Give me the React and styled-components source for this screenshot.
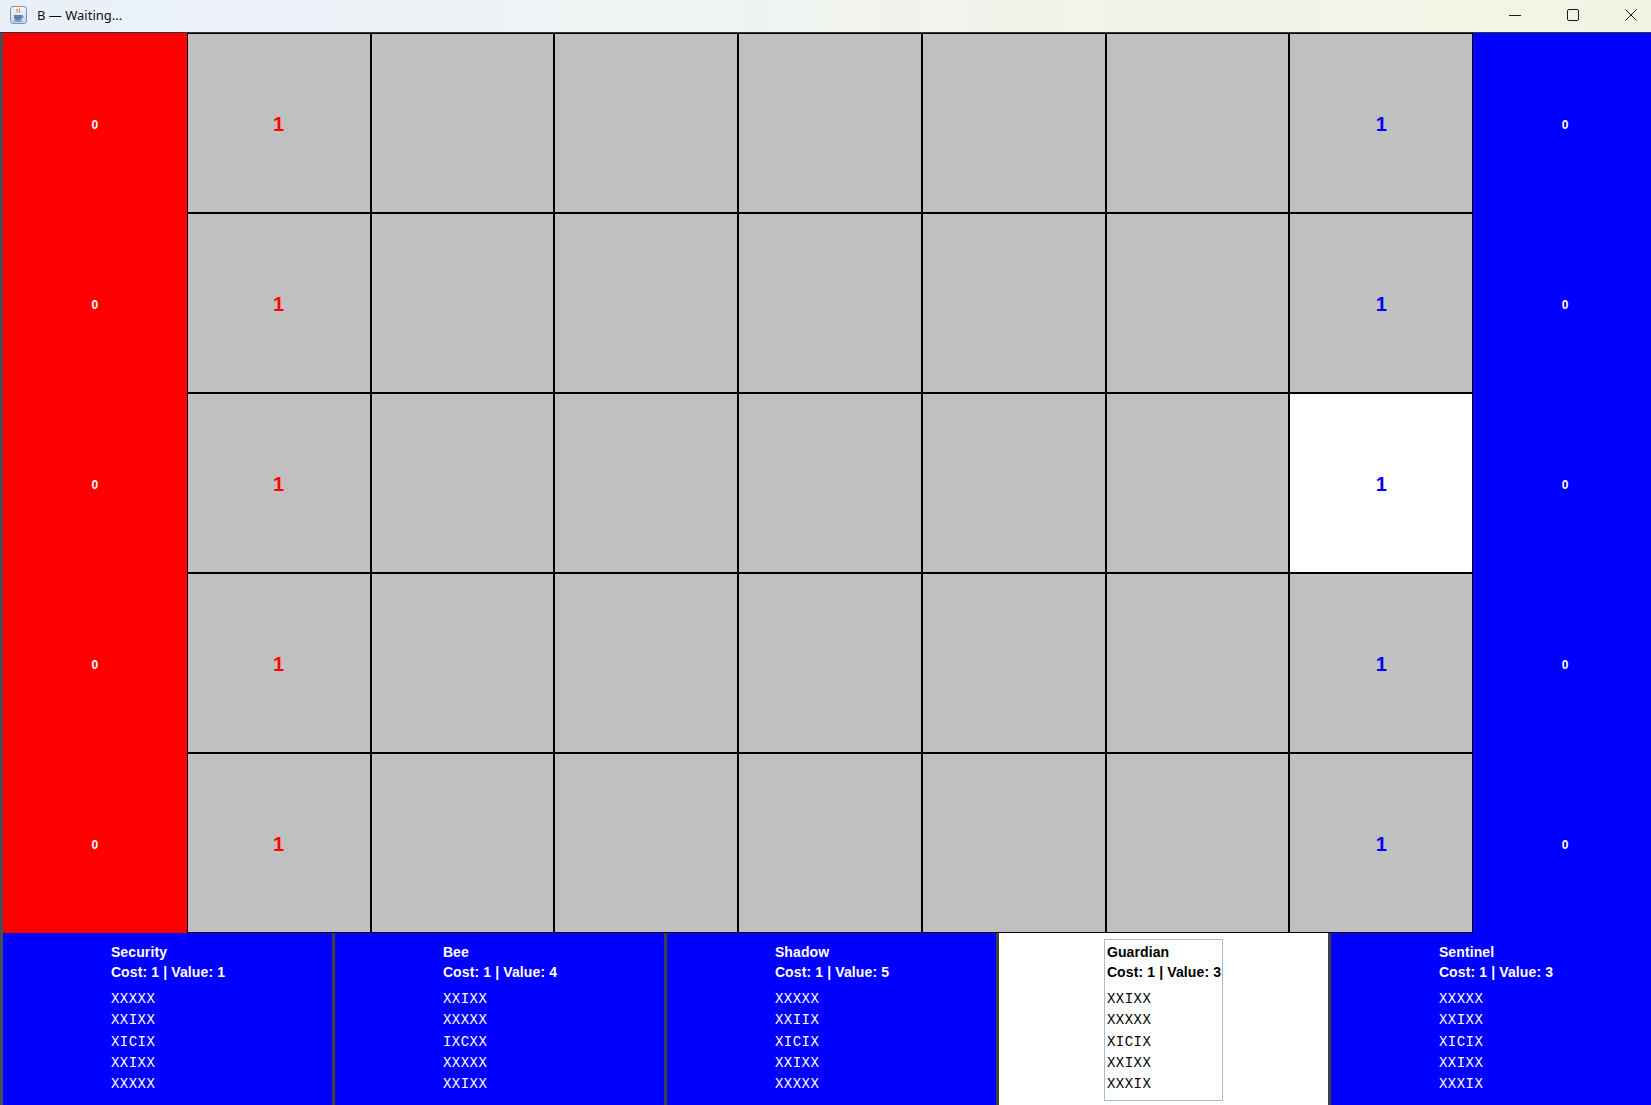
import React from "react"
import styled, { createGlobalStyle } from "styled-components"

const colors = {
  red: "#ff0000",
  blue: "#0000ff",
  gray: "#c0c0c0",
  white: "#ffffff",
  black: "#000000",
  frame: "#454c55",
  gap: "#404040",
}

const GlobalStyle = createGlobalStyle`
  html, body {
    margin: 0;
    padding: 0;
    overflow: hidden;
    background: ${colors.frame};
  }
  * {
    box-sizing: border-box;
  }
`

const Window = styled.div`
  width: 1660px;
  height: 1105px;
  display: flex;
  flex-direction: column;
  overflow: hidden;
`

const TitleBar = styled.div`
  height: 33px;
  flex: none;
  display: flex;
  align-items: center;
  background: linear-gradient(90deg, #e9f0f9 0%, #eef3f4 35%, #f2f3e7 70%, #f3f3e5 100%);
  border-bottom: 1px solid #2f353c;
  padding-left: 10px;
  padding-bottom: 2px;
`

const TitleText = styled.span`
  font-family: "Noto Sans", "Open Sans", sans-serif;
  font-size: 13px;
  color: #111;
  margin-left: 10px;
  flex: 1;
`

const Controls = styled.div`
  display: flex;
  height: 100%;
`

const ControlButton = styled.div`
  width: 58px;
  height: 100%;
  display: flex;
  align-items: center;
  justify-content: center;
`

const Content = styled.div`
  flex: 1;
  display: flex;
  flex-direction: column;
  border-left: 3px solid ${colors.frame};
  border-right: 3px solid ${colors.frame};
  min-height: 0;
`

const Board = styled.div`
  display: grid;
  grid-template-columns: repeat(9, 1fr);
  grid-template-rows: repeat(5, 180px);
  flex: none;
`

const Cell = styled.div`
  display: flex;
  align-items: center;
  justify-content: center;
  background: ${p => p.$bg};
  border: ${p => (p.$framed ? `1px solid ${colors.black}` : "none")};
  font-family: "Liberation Sans", Arial, sans-serif;
  font-weight: bold;
`

const SideCount = styled.span`
  color: ${colors.white};
  font-size: 12px;
  margin-top: 3px;
`

const Strength = styled.span`
  color: ${p => p.$color};
  font-size: 20px;
  margin-top: 2px;
`

const CardBar = styled.div`
  flex: 1;
  display: grid;
  grid-template-columns: repeat(5, 329px);
  column-gap: 3px;
  background: ${colors.gap};
`

const Card = styled.div`
  background: ${p => (p.$selected ? colors.white : colors.blue)};
  color: ${p => (p.$selected ? colors.black : colors.white)};
  display: flex;
  justify-content: center;
  align-items: flex-start;
  padding-top: 6px;
`

const CardBox = styled.div`
  border: 1px solid ${p => (p.$selected ? "#a5bcd5" : "transparent")};
  padding: 2px 1px 5px 2px;
`

const CardTitle = styled.div`
  font-family: "Liberation Sans", Arial, sans-serif;
  font-weight: bold;
  font-size: 14px;
  letter-spacing: 0.12px;
  line-height: 20px;
  white-space: nowrap;
`

const Pattern = styled.div`
  margin-top: 7px;
  font-family: "Liberation Mono", "Courier New", monospace;
  font-size: 14px;
  letter-spacing: 0.5px;
  line-height: 21.3px;
  white-space: pre;
`

const JavaIcon = () => (
  <svg width="17" height="18" viewBox="0 0 17 18">
    <defs>
      <linearGradient id="jbg" x1="0" y1="0" x2="0" y2="1">
        <stop offset="0" stopColor="#f4f7fb" />
        <stop offset="1" stopColor="#c9d6e4" />
      </linearGradient>
    </defs>
    <rect x="0.5" y="0.5" width="16" height="17" rx="2.5" fill="url(#jbg)" stroke="#7d93ad" />
    <path d="M7 3c-1 1.2 1 2 0 3.5M9.5 2.5c-1.3 1.5 1.2 2.2-.2 4" stroke="#e0762a" strokeWidth="1.1" fill="none" />
    <path d="M4 9h8v2.5c0 2-1.8 3-4 3s-4-1-4-3z" fill="#5a7fb0" />
    <path d="M12 9.6c1.6 0 1.6 2.2 0 2.2" stroke="#5a7fb0" strokeWidth="1" fill="none" />
    <rect x="3.5" y="14.6" width="9" height="1" fill="#5a7fb0" />
  </svg>
)

const MinimizeIcon = () => (
  <svg width="12" height="12" viewBox="0 0 12 12">
    <path d="M0 6.5h12" stroke="#1a1a1a" strokeWidth="1" />
  </svg>
)

const MaximizeIcon = () => (
  <svg width="12" height="12" viewBox="0 0 12 12">
    <rect x="0.5" y="0.5" width="11" height="11" rx="1.5" fill="none" stroke="#1a1a1a" strokeWidth="1" />
  </svg>
)

const CloseIcon = () => (
  <svg width="12" height="12" viewBox="0 0 12 12">
    <path d="M0.5 0.5l11 11M11.5 0.5l-11 11" stroke="#1a1a1a" strokeWidth="1" />
  </svg>
)

const ROWS = 5
const COLS = 9
const highlighted = { row: 2, col: 7 }

const cards = [
  { name: "Security", cost: 1, value: 1, pattern: ["XXXXX", "XXIXX", "XICIX", "XXIXX", "XXXXX"] },
  { name: "Bee", cost: 1, value: 4, pattern: ["XXIXX", "XXXXX", "IXCXX", "XXXXX", "XXIXX"] },
  { name: "Shadow", cost: 1, value: 5, pattern: ["XXXXX", "XXIIX", "XICIX", "XXIXX", "XXXXX"] },
  { name: "Guardian", cost: 1, value: 3, pattern: ["XXIXX", "XXXXX", "XICIX", "XXIXX", "XXXIX"], selected: true },
  { name: "Sentinel", cost: 1, value: 3, pattern: ["XXXXX", "XXIXX", "XICIX", "XXIXX", "XXXIX"] },
]

const renderCell = (row, col) => {
  const key = `${row}-${col}`
  if (col === 0 || col === COLS - 1) {
    return (
      <Cell key={key} $bg={col === 0 ? colors.red : colors.blue}>
        <SideCount>0</SideCount>
      </Cell>
    )
  }
  const isLit = row === highlighted.row && col === highlighted.col
  return (
    <Cell key={key} $framed $bg={isLit ? colors.white : colors.gray}>
      {col === 1 && <Strength $color={colors.red}>1</Strength>}
      {col === COLS - 2 && <Strength $color={colors.blue}>1</Strength>}
    </Cell>
  )
}

const App = () => {
  const cells = []
  for (let r = 0; r < ROWS; r++) {
    for (let c = 0; c < COLS; c++) {
      cells.push(renderCell(r, c))
    }
  }

  return (
    <>
      <GlobalStyle />
      <Window>
        <TitleBar>
          <JavaIcon />
          <TitleText>B — Waiting...</TitleText>
          <Controls>
            <ControlButton>
              <MinimizeIcon />
            </ControlButton>
            <ControlButton>
              <MaximizeIcon />
            </ControlButton>
            <ControlButton>
              <CloseIcon />
            </ControlButton>
          </Controls>
        </TitleBar>
        <Content>
          <Board>{cells}</Board>
          <CardBar>
            {cards.map(card => (
              <Card key={card.name} $selected={card.selected}>
                <CardBox $selected={card.selected}>
                  <CardTitle>{card.name}</CardTitle>
                  <CardTitle>
                    Cost: {card.cost} | Value: {card.value}
                  </CardTitle>
                  <Pattern>{card.pattern.join("\n")}</Pattern>
                </CardBox>
              </Card>
            ))}
          </CardBar>
        </Content>
      </Window>
    </>
  )
}

export default App
